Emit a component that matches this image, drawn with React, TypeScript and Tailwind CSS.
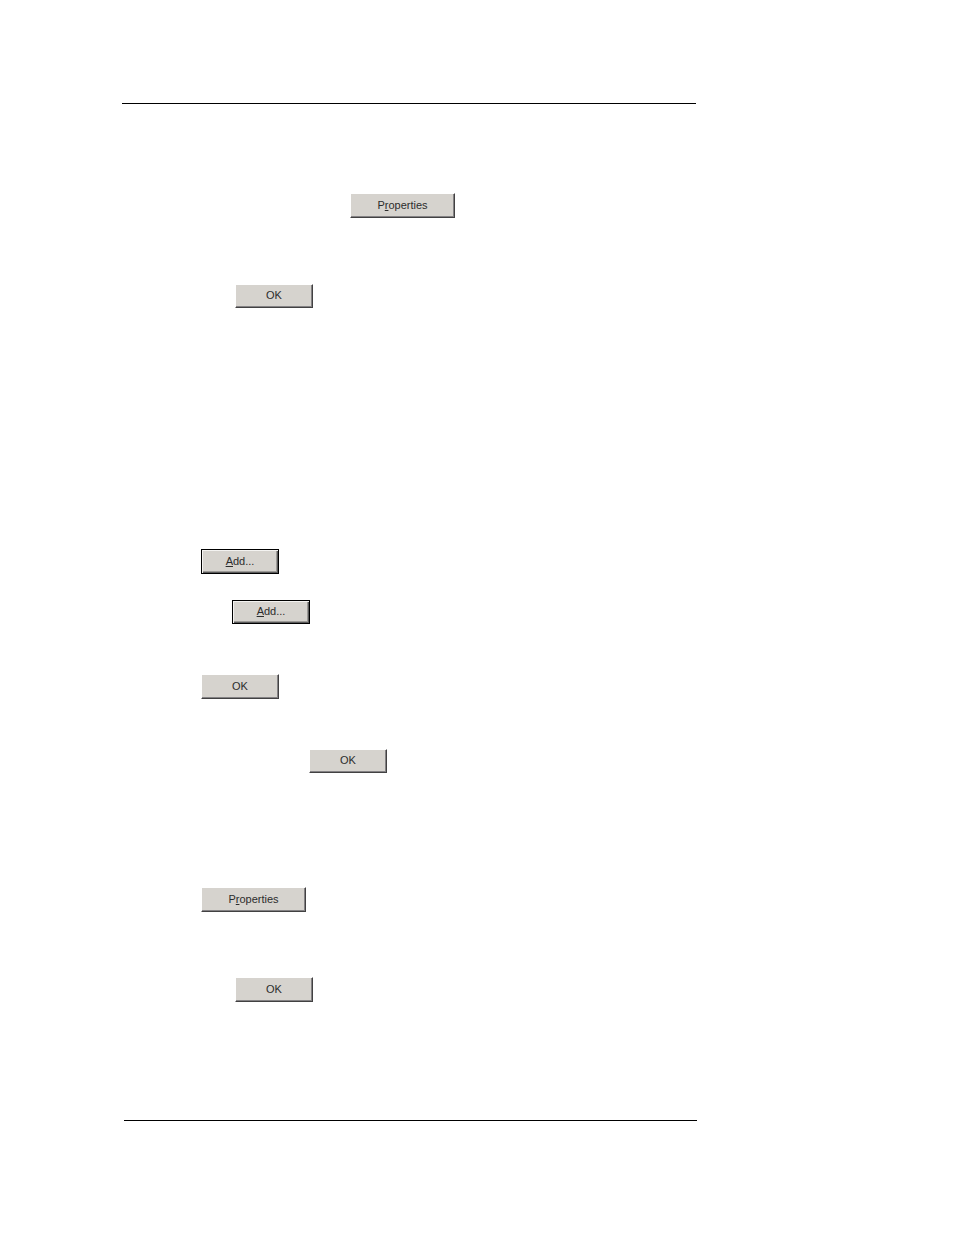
import type { ReactNode } from "react";
import { clsx } from "clsx";

interface ClassicButtonProps {
  children: ReactNode;
  className?: string;
  focused?: boolean;
}

const ClassicButton = ({ children, className, focused }: ClassicButtonProps) => {
  return (
    <button
      type="button"
      className={clsx(
        "flex items-center justify-center border bg-[#d6d3ce] pb-0.5 text-[11px] leading-4 text-[#2c2c2c]",
        focused
          ? "border-black shadow-[inset_1px_1px_0_#f4f3f1,inset_-1px_-1px_0_#5a5a5a,inset_-2px_-2px_0_#9c9a97]"
          : "border-t-white border-l-white border-r-[#424142] border-b-[#424142] shadow-[inset_-1px_-1px_0_#848284]",
        className,
      )}
    >
      <span>{children}</span>
    </button>
  );
};

const PropertiesButton = () => (
  <ClassicButton className="h-[25px] w-[105px]">
    P<u>r</u>operties
  </ClassicButton>
);

const OkButton = ({ className }: { className: string }) => (
  <ClassicButton className={clsx("w-[78px]", className)}>OK</ClassicButton>
);

const AddButton = ({ className }: { className: string }) => (
  <ClassicButton focused className={clsx("w-[78px]", className)}>
    <u>A</u>dd...
  </ClassicButton>
);

const App = () => {
  return (
    <div className="bg-white pt-[103px] pb-[114px] font-['Liberation_Sans',Arial,sans-serif]">
      <hr className="mr-[258px] ml-[122px] border-black" />
      <main className="pl-[201px]">
        <section className="pt-[89px]">
          <div className="pl-[149px]">
            <PropertiesButton />
          </div>
          <div className="pt-[66px] pl-[34px]">
            <OkButton className="h-6" />
          </div>
        </section>
        <section className="pt-[241px]">
          <AddButton className="h-[25px]" />
          <div className="pt-[26px] pl-[31px]">
            <AddButton className="h-6" />
          </div>
          <div className="pt-[50px]">
            <OkButton className="h-[25px]" />
          </div>
          <div className="pt-[50px] pl-[108px]">
            <OkButton className="h-6" />
          </div>
        </section>
        <section className="pt-[114px] pb-[118px]">
          <PropertiesButton />
          <div className="pt-[65px] pl-[34px]">
            <OkButton className="h-[25px]" />
          </div>
        </section>
      </main>
      <hr className="mr-[257px] ml-[124px] border-black" />
    </div>
  );
};

export default App;
